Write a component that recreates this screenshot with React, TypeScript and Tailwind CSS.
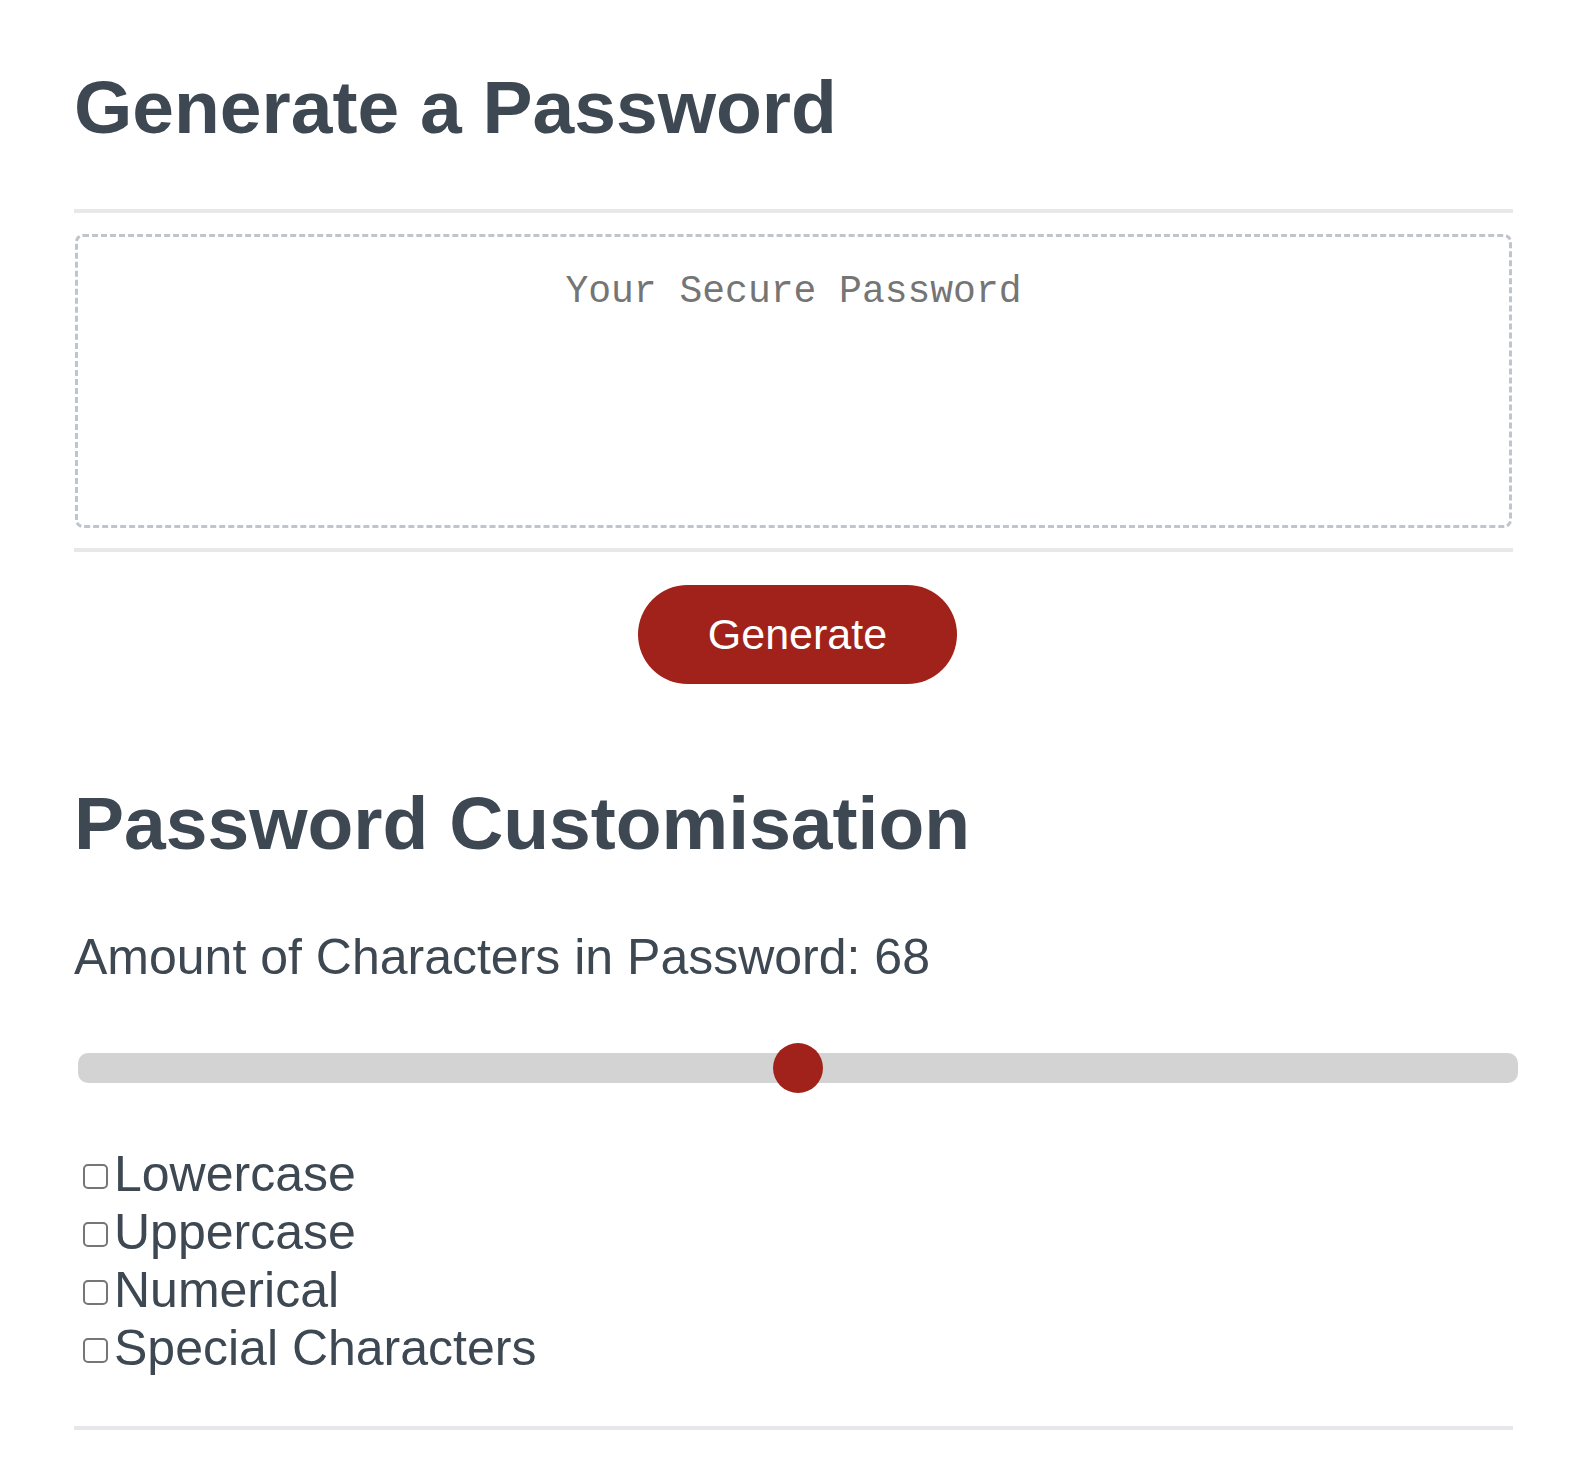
import { useState } from 'react';

const options = ['Lowercase', 'Uppercase', 'Numerical', 'Special Characters'];

const App = () => {
  const [length] = useState(68);
  const [checked, setChecked] = useState<Record<string, boolean>>({});

  // slider runs 8..128, so 68 sits at the middle
  const pct = (length - 8) / 120;

  return (
    <div className="min-h-screen bg-white text-[#3d4852] font-['Liberation_Sans',Arial,sans-serif]">
      <div className="pl-[74px] pr-[65px] pt-[65px]">
        {/* Generator */}
        <h1 className="text-[75px] leading-[84px] font-bold">Generate a Password</h1>

        <div className="mt-[60px] h-[4px] bg-[#e8e8e8]" />

        <div className="mx-[1px] mt-[21px] h-[294px] rounded-[8px] border-[3px] border-dashed border-[#bfc5cc] pt-[33px]">
          <p className="text-center text-[38px] leading-[43px] text-[#757575] font-['Liberation_Mono','Courier_New',monospace]">
            Your Secure Password
          </p>
        </div>

        <div className="mt-[20px] h-[4px] bg-[#e8e8e8]" />

        <div className="mt-[33px] flex justify-center">
          <button className="ml-[8px] h-[99px] w-[319px] rounded-full bg-[#a1221a] text-[43px] text-white">
            Generate
          </button>
        </div>

        {/* Customisation */}
        <h2 className="mt-[97px] text-[75px] leading-[84px] font-bold">Password Customisation</h2>

        <p className="mt-[63px] text-[50px] leading-[58px]">
          Amount of Characters in Password: {length}
        </p>

        <div className="relative mt-[67px] ml-[4px] h-[30px] w-[1440px] rounded-[10px] bg-[#d3d3d3]">
          <div
            className="absolute top-[-10px] h-[50px] w-[50px] rounded-full bg-[#a1221a]"
            style={{ left: `calc(${pct} * (100% - 50px))` }}
          />
        </div>

        <div className="mt-[62px]">
          {options.map(opt => (
            <label key={opt} className="flex items-start text-[50px] leading-[58px]">
              <input
                type="checkbox"
                checked={!!checked[opt]}
                onChange={() => setChecked({ ...checked, [opt]: !checked[opt] })}
                className="ml-[9px] mr-[6px] mt-[19px] h-[25px] w-[25px] shrink-0 appearance-none rounded-[5px] border-2 border-[#767676] bg-white"
              />
              <span>{opt}</span>
            </label>
          ))}
        </div>

        <div className="mt-[49px] h-[4px] bg-[#e5e7eb]" />
      </div>
    </div>
  );
};

export default App;
